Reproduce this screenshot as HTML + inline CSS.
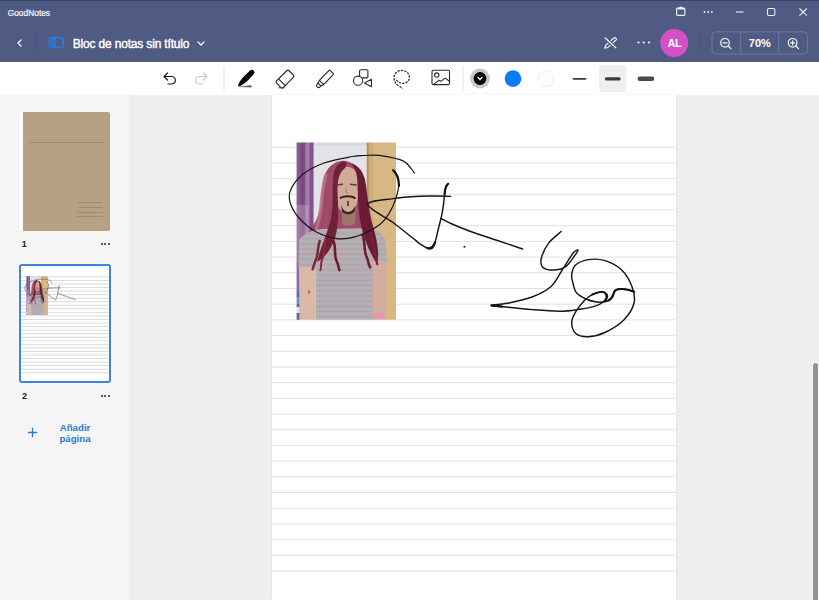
<!DOCTYPE html>
<html><head><meta charset="utf-8">
<style>
*{margin:0;padding:0;box-sizing:border-box}
html,body{width:819px;height:600px;overflow:hidden;background:#eeeeee;font-family:"Liberation Sans",sans-serif}
.abs{position:absolute}
#top{position:absolute;left:0;top:0;width:819px;height:62px;background:#505b83}
#topline{position:absolute;left:0;top:0;width:819px;height:1px;background:#3b4463}
#apptitle{position:absolute;left:7.7px;top:7.8px;font-size:8.4px;color:#f6f7fa;line-height:11px;-webkit-text-stroke:0.2px #f6f7fa}
#title{position:absolute;left:72.7px;top:36.6px;font-size:12px;color:#fff;line-height:14px;font-weight:400;letter-spacing:-0.17px;-webkit-text-stroke:0.4px #fff}
#toolbar{position:absolute;left:0;top:62px;width:819px;height:33px;background:#fff}
#sidebar{position:absolute;left:0;top:95px;width:129px;height:505px;background:#f5f5f5}
#canvas{position:absolute;left:129px;top:95px;width:690px;height:505px;background:#eeeeee}
#page{position:absolute;left:272px;top:95px;width:404px;height:505px;background:#fff;box-shadow:0 0 2px rgba(0,0,0,0.10)}
#scroll{position:absolute;left:813.2px;top:362.5px;width:4.5px;height:240px;background:#939393;border-radius:3px;box-shadow:0 0 0 1px rgba(255,255,255,0.5)}
.lbl{position:absolute;font-size:9px;font-weight:700;color:#1b1b1b;line-height:10px}
.dots3{position:absolute;width:10px;height:2px}
.dots3 i{position:absolute;top:0;width:2px;height:2px;border-radius:1px;background:#222}
</style></head><body>
<div id="top"></div>
<div id="topline"></div>
<div id="apptitle">GoodNotes</div>

<!-- title bar controls -->
<svg class="abs" style="left:660px;top:0" width="159" height="25" viewBox="660 0 159 25" fill="none" stroke="#eef0f6" stroke-width="1.1">
  <!-- clipboard -->
  <rect x="676.6" y="8" width="8.3" height="7.4" rx="1.2" stroke-width="1.2"/>
  <path d="M677.5,9.4 L684,9.4 L684,8 L681.8,7.2 L680.75,6.2 L679.7,7.2 L677.5,8 Z" fill="#eef0f6" stroke="none"/>
  <!-- dots -->
  <circle cx="704.5" cy="12" r="0.9" fill="#eef0f6" stroke="none"/>
  <circle cx="708.2" cy="12" r="0.9" fill="#eef0f6" stroke="none"/>
  <circle cx="711.9" cy="12" r="0.9" fill="#eef0f6" stroke="none"/>
  <!-- minimize -->
  <line x1="736" y1="12" x2="743.5" y2="12"/>
  <!-- maximize -->
  <rect x="767.5" y="8.5" width="7.3" height="7" rx="1.2"/>
  <!-- close -->
  <path d="M799.5 8.5 L806.8 15.6 M806.8 8.5 L799.5 15.6"/>
</svg>

<!-- header left -->
<svg class="abs" style="left:0;top:25px" width="220" height="37" viewBox="0 25 220 37" fill="none">
  <path d="M21 40 L18 43 L21 46" stroke="#fff" stroke-width="1.3" stroke-linecap="round" stroke-linejoin="round"/>
  <line x1="36.5" y1="34.5" x2="36.5" y2="51" stroke="#46507a" stroke-width="1"/>
  <rect x="49.2" y="37.6" width="14" height="9.9" rx="2.4" stroke="#2c79d8" stroke-width="1.7"/>
  <rect x="49.5" y="38" width="5.5" height="9.2" fill="#3a6cc0"/>
  <line x1="54.8" y1="37.8" x2="54.8" y2="47.5" stroke="#2c79d8" stroke-width="1.6"/>
  <path d="M198 42 L201 45 L204 42" stroke="#fff" stroke-width="1.2" stroke-linecap="round" stroke-linejoin="round"/>
</svg>
<div id="title">Bloc de notas sin título</div>

<!-- header right -->
<svg class="abs" style="left:590px;top:25px" width="229" height="37" viewBox="590 25 229 37" fill="none" stroke="#f4f5f9">
  <!-- pen slash -->
  <g stroke-width="1.2" stroke-linecap="round" stroke-linejoin="round">
    <g transform="translate(604.6,48.3) rotate(-41.6)"><path d="M0,0 L3,-1.5 L13.8,-1.5 A1.5,1.5 0 0 1 13.8,1.5 L3,1.5 Z" stroke-width="1.1"/></g>
    <path d="M605.3 38 L615.8 47.8" stroke="#505b83" stroke-width="3.4"/>
    <path d="M605.3 38 L615.8 47.8" stroke-width="1.3"/>
  </g>
  <circle cx="638.5" cy="42.5" r="1.1" fill="#f4f5f9" stroke="none"/>
  <circle cx="643.7" cy="42.5" r="1.1" fill="#f4f5f9" stroke="none"/>
  <circle cx="648.9" cy="42.5" r="1.1" fill="#f4f5f9" stroke="none"/>
  <circle cx="674.2" cy="43" r="14" fill="#d64fc6" stroke="none"/>
  <line x1="699.5" y1="34.5" x2="699.5" y2="51" stroke="#46507a"/>
  <rect x="712" y="31.8" width="95.6" height="22.2" rx="4" stroke="#6e779b" stroke-width="1"/>
  <line x1="740.7" y1="32" x2="740.7" y2="54" stroke="#6e779b"/>
  <line x1="778.7" y1="32" x2="778.7" y2="54" stroke="#6e779b"/>
  <g stroke-width="1.2" stroke-linecap="round">
    <circle cx="725" cy="42.8" r="4.3"/>
    <line x1="728.2" y1="46" x2="731" y2="48.6"/>
    <line x1="723" y1="42.8" x2="727" y2="42.8"/>
    <circle cx="792.6" cy="42.8" r="4.3"/>
    <line x1="795.8" y1="46" x2="798.6" y2="48.6"/>
    <line x1="790.6" y1="42.8" x2="794.6" y2="42.8"/>
    <line x1="792.6" y1="40.8" x2="792.6" y2="44.8"/>
  </g>
</svg>
<div class="abs" style="left:660.3px;top:37px;width:28.4px;text-align:center;font-size:11px;font-weight:700;color:#fff;line-height:13px;letter-spacing:-0.3px">AL</div>
<div class="abs" style="left:741px;top:36.5px;width:37.7px;text-align:center;font-size:11px;font-weight:700;color:#fff;line-height:13px">70%</div>

<div id="toolbar"></div>
<!-- toolbar icons -->
<svg class="abs" style="left:150px;top:62px" width="520" height="33" viewBox="150 62 520 33" fill="none" stroke="#1c1c1c" stroke-width="1.2" stroke-linecap="round" stroke-linejoin="round">
  <!-- undo -->
  <path d="M167.5 73 L164 76.5 L167.5 80"/>
  <path d="M164.5 76.5 H172 A4 3.8 0 0 1 172 84 H168"/>
  <!-- redo -->
  <g stroke="#c9c9c9">
    <path d="M203.5 73 L207 76.5 L203.5 80"/>
    <path d="M206.5 76.5 H199 A4 3.8 0 0 0 199 84 H203"/>
  </g>
  <line x1="224" y1="66.5" x2="224" y2="91" stroke="#e3e3e3" stroke-width="1"/>
  <!-- pen -->
  <g transform="translate(238.1,86.4) rotate(-45.5)" stroke="none">
    <path d="M0,0 C3,-2.6 10,-3.1 19.6,-2.6 A2.6,2.6 0 0 1 19.6,2.6 C10,3.1 3,2.6 0,0 Z" fill="#050505"/>
    <line x1="12.3" y1="-3" x2="12.3" y2="3" stroke="#555" stroke-width="0.5"/>
  </g>
  <path d="M239.5,86.5 L251.2,85.6 L251.2,87.1 Z" fill="#444" stroke="#666" stroke-width="0.4"/>
  <!-- eraser -->
  <g transform="translate(284.9,79.25) rotate(45)" stroke="#262626" stroke-width="1.15">
    <rect x="-4.7" y="-8.9" width="9.4" height="17.6" rx="1.6"/>
    <line x1="-4.7" y1="4.3" x2="4.7" y2="4.3"/>
  </g>
  <line x1="278.8" y1="87.8" x2="284.4" y2="87.8" stroke="#444" stroke-width="0.9"/>
  <!-- highlighter -->
  <g transform="translate(326.4,77.4) rotate(-46)" stroke="#262626" stroke-width="1.1">
    <rect x="-7" y="-3" width="14.6" height="6" rx="1"/>
    <path d="M-7,-3 L-10,-2 M-7,3 L-10,2"/>
    <path d="M-10,-2 L-11.3,-2 A2,2 0 0 0 -11.3,2 L-10,2 Z"/>
  </g>
  <!-- shapes -->
  <g stroke="#2a2a2a" stroke-width="1.1">
    <path d="M359.6,75.5 V71 A1.2,1.2 0 0 1 360.8,69.8 H366.7 A1.2,1.2 0 0 1 367.9,71 V76.7 A1.2,1.2 0 0 1 366.7,77.9 H362.6"/>
    <circle cx="358.1" cy="80.7" r="4.6"/>
    <path d="M364.5,82.9 L371.4,79.2 L371.4,86.8 Z"/>
  </g>
  <!-- lasso -->
  <path transform="translate(0,0.6)" d="M396.6,79.2 C398.5,82.3 402,83.6 405,82.5 C408.3,81.3 409.8,78.5 409.3,75.5 C408.6,71.8 405.2,69.8 401.5,69.9 C397,70 393.7,73.4 394,77.5 C394.2,81 396.2,83.6 398.5,85.2 C400,86.2 401.5,87 402.6,87.8" stroke="#2a2a2a" stroke-width="1.25" stroke-linecap="butt" stroke-dasharray="2.3 1.1"/>
  <!-- image -->
  <g stroke="#2a2a2a" stroke-width="1.1">
    <rect x="432" y="70.3" width="17.5" height="14.3" rx="1.4"/>
    <circle cx="436.7" cy="75.1" r="2.2"/>
    <path d="M433.6,84.4 L439.1,80.2 L440.8,81.4 L445.2,78.1 L449.5,81.3"/>
  </g>
  <!-- colors -->
  <circle cx="480" cy="78.5" r="10" fill="#c8c8c8" stroke="none"/>
  <circle cx="480" cy="78.5" r="6.4" fill="#000" stroke="none"/>
  <path d="M477.9,77.5 L480,79.5 L482.1,77.5" stroke="#fff" stroke-width="1.2"/>
  <circle cx="513" cy="78.6" r="8.3" fill="#0a7bf4" stroke="none"/>
  <circle cx="546" cy="78.6" r="8" fill="#fdfdfd" stroke="#efefef" stroke-width="1"/>
  <!-- widths -->
  <rect x="599" y="65" width="27.5" height="27.2" rx="4" fill="#efefef" stroke="none"/>
  <line x1="573.5" y1="78.8" x2="585.5" y2="78.8" stroke="#3c3c3c" stroke-width="1.8"/>
  <line x1="606.5" y1="78.8" x2="619" y2="78.8" stroke="#3c3c3c" stroke-width="3.3"/>
  <line x1="639.8" y1="78.8" x2="652" y2="78.8" stroke="#4a4a4a" stroke-width="4.6"/>
  <line x1="463" y1="66.5" x2="463" y2="91" stroke="#e3e3e3" stroke-width="1"/>
</svg>

<div id="sidebar"></div>
<div id="canvas"></div>
<!-- thumb 1 -->
<div class="abs" style="left:18.7px;top:111.7px;width:4.5px;height:119px;background:#fcfcfb;border-radius:2px 0 0 2px;box-shadow:0 0 1.5px rgba(0,0,0,0.1)"></div>
<div class="abs" style="left:23px;top:111.7px;width:87px;height:119px;background:#b6a185;border-radius:0 2px 2px 0"></div>
<div class="abs" style="left:30px;top:141.6px;width:74px;height:1px;background:#a08b70"></div>
<div class="abs" style="left:77px;top:201.6px;width:25.5px;height:1px;background:#a08b70"></div>
<div class="abs" style="left:77px;top:206.6px;width:25.5px;height:1px;background:#a08b70"></div>
<div class="abs" style="left:77px;top:211.6px;width:25.5px;height:1px;background:#a08b70"></div>
<div class="abs" style="left:77px;top:216.2px;width:25.5px;height:1px;background:#a08b70"></div>
<div class="lbl" style="left:21.8px;top:238.5px">1</div>
<div class="dots3" style="left:100.5px;top:242.5px"><i style="left:0"></i><i style="left:3.8px"></i><i style="left:7.6px"></i></div>
<!-- thumb 2 -->
<div class="abs" style="left:18.7px;top:264.2px;width:92px;height:118.8px;border:2px solid #3c87d9;border-radius:3px;background:#fff;overflow:hidden">
  <div style="position:absolute;left:0;top:0;width:404px;height:527px;transform:scale(0.2178);transform-origin:0 0"><svg width="404" height="527" viewBox="0 0 404 527"><rect x="0" y="47.67" width="404" height="4.5" fill="#dadada"/><rect x="0" y="63.97" width="404" height="4.5" fill="#dadada"/><rect x="0" y="80.27" width="404" height="4.5" fill="#dadada"/><rect x="0" y="96.57" width="404" height="4.5" fill="#dadada"/><rect x="0" y="112.87" width="404" height="4.5" fill="#dadada"/><rect x="0" y="129.17" width="404" height="4.5" fill="#dadada"/><rect x="0" y="145.46" width="404" height="4.5" fill="#dadada"/><rect x="0" y="161.76" width="404" height="4.5" fill="#dadada"/><rect x="0" y="178.06" width="404" height="4.5" fill="#dadada"/><rect x="0" y="194.36" width="404" height="4.5" fill="#dadada"/><rect x="0" y="210.66" width="404" height="4.5" fill="#dadada"/><rect x="0" y="226.96" width="404" height="4.5" fill="#dadada"/><rect x="0" y="243.26" width="404" height="4.5" fill="#dadada"/><rect x="0" y="259.56" width="404" height="4.5" fill="#dadada"/><rect x="0" y="275.86" width="404" height="4.5" fill="#dadada"/><rect x="0" y="292.16" width="404" height="4.5" fill="#dadada"/><rect x="0" y="308.46" width="404" height="4.5" fill="#dadada"/><rect x="0" y="324.76" width="404" height="4.5" fill="#dadada"/><rect x="0" y="341.06" width="404" height="4.5" fill="#dadada"/><rect x="0" y="357.36" width="404" height="4.5" fill="#dadada"/><rect x="0" y="373.66" width="404" height="4.5" fill="#dadada"/><rect x="0" y="389.96" width="404" height="4.5" fill="#dadada"/><rect x="0" y="406.25" width="404" height="4.5" fill="#dadada"/><rect x="0" y="422.55" width="404" height="4.5" fill="#dadada"/><rect x="0" y="438.85" width="404" height="4.5" fill="#dadada"/><rect x="0" y="455.15" width="404" height="4.5" fill="#dadada"/><rect x="0" y="471.45" width="404" height="4.5" fill="#dadada"/><rect x="0" y="487.75" width="404" height="4.5" fill="#dadada"/><g transform="translate(-272,-95)"><defs><clipPath id="qc"><rect x="296.6" y="142.4" width="99.39999999999998" height="177.29999999999998"/></clipPath>
<filter id="qb" x="-5%" y="-5%" width="110%" height="110%"><feGaussianBlur stdDeviation="0.75"/></filter>
<pattern id="qs" x="0" y="1" width="10" height="5.2" patternUnits="userSpaceOnUse"><rect width="10" height="5.2" fill="#b0b1b5"/><rect y="3.2" width="10" height="1.1" fill="#bf98a2"/></pattern>
</defs>
<g clip-path="url(#qc)"><g filter="url(#qb)">
<rect x="294.6" y="140.4" width="103.39999999999998" height="181.29999999999998" fill="#e3e3e6"/>
<rect x="313" y="140.4" width="55" height="5" fill="#d6d6da"/>
<!-- door -->
<rect x="366.8" y="140.4" width="32" height="182" fill="#d0ad78"/>
<rect x="373" y="140.4" width="25" height="182" fill="#d7b885"/>
<rect x="366.8" y="140.4" width="1.8" height="182" fill="#b59064"/>
<!-- curtain -->
<rect x="294.6" y="140.4" width="18.5" height="145" fill="#8a5890"/>
<rect x="300.5" y="140.4" width="4" height="145" fill="#774a7d"/>
<rect x="305.5" y="140.4" width="4" height="145" fill="#a57aab"/>
<rect x="310.5" y="140.4" width="3" height="145" fill="#80528a"/>
<rect x="294.6" y="205" width="14" height="70" fill="#d8b4d8" opacity="0.35"/>
<rect x="294.6" y="262" width="8" height="30" fill="#8a6aa8"/>
<rect x="294.6" y="290" width="8" height="32" fill="#5a6a9a"/>
<rect x="294.6" y="297" width="6" height="7" fill="#5b95d0"/>
<rect x="294.6" y="307" width="6" height="6" fill="#e4e0ea"/>
<!-- hair back mass -->
<path d="M342,160.8 C336,161.5 330,165 326,172 C322,180 321.5,192 320.5,204 C319.5,214 316,222 311,228 C309,240 310,254 316,268 L330,266 L356,262 L378,266 C381,256 380,244 376.7,235 C372,226 368,216 367.3,208 C366.5,196 365.5,184 362,174 C359,167 353,161 342,160.8 Z" fill="#a24a68"/>
<path d="M326,174 C322,186 322,200 320,214 C318,224 315,232 314,244" stroke="#c07a94" stroke-width="3.5" fill="none" opacity="0.7"/>
<!-- shirt -->
<path d="M299,240 C304,233 313,230 322,229 L368,228 C377,229 383,233 385.5,240 L387,262 L373,263 L372.5,322 L315.5,322 L315.5,268 L298.5,268 Z" fill="url(#qs)"/>
<!-- arms -->
<path d="M299,267 L315.5,267 L315,322 L299.5,322 Z" fill="#d9b8a8"/>
<path d="M372.8,262 L386.5,262 L385.5,322 L373,322 Z" fill="#d2ac9c"/>
<path d="M308,290 l3,2 l-3,2 z" fill="#8a7068"/>
<rect x="373.5" y="312.5" width="10.5" height="5.5" rx="2" fill="#ef90b4"/>
<!-- neck & face -->
<path d="M342,208 L356,208 L355,224 C351,226 346,226 342,224 Z" fill="#9c7466"/>
<path d="M335,178 C335.5,171 339,167 346,166.8 C353,167 357,171 357.5,178 L358,195 C357.5,206 354,213.5 347.5,214 C340.5,213.5 336,206 335.5,195 Z" fill="#d0ab98"/>
<!-- hair locks -->
<path d="M344,161 C337,163 333.5,169 333,180 C332.5,194 333,206 331,218 C328,232 321,246 317,262 C324,258 331,250 335,238 C338.5,226 338.5,212 337.8,198 C337,184 337.5,174 345,168 C347,166 347,162 344,161 Z" fill="#6e2236"/>
<path d="M351,164 C355,167.5 357,173 357.5,182 C358,196 358,210 360.5,222 C363,236 368,250 377,264 C380,254 377,240 373,226 C369,212 367.5,196 365.5,182 C363.5,171 358,165 351,164 Z" fill="#6a1f34"/>
<path d="M320,240 C317,248 319,254 315,262 C313,266 314,268 312,270" stroke="#7a2038" stroke-width="2.4" fill="none"/>
<path d="M326,238 C323,246 326,252 322,260 C320,264 322,268 320,271" stroke="#8a2a45" stroke-width="2" fill="none"/>
<path d="M333,240 C337,248 333,254 337,262 C339,266 338,268 340,271" stroke="#6e1c33" stroke-width="2.6" fill="none"/>
<path d="M362,234 C366,242 363,250 367,258 C369,262 368,266 371,268" stroke="#6e1c33" stroke-width="2.6" fill="none"/>
<path d="M370,232 C374,240 372,248 376,256 C377,260 376,263 378,265" stroke="#7a2038" stroke-width="2.2" fill="none"/>
<!-- features -->
<path d="M336.5,185 L343,184.3 M350,184.3 L356.5,185" stroke="#5a3c34" stroke-width="1.4"/>
<path d="M345.8,187 L346.2,193 L348.5,193" stroke="#a88474" stroke-width="0.8" fill="none"/>
<path d="M340,198.5 C343,195.5 352,195.5 355.5,198.5" stroke="#35221d" stroke-width="1.8" fill="none"/>
<path d="M341,205 C344,214 351.5,214.5 355.5,205.5 L354.5,211.5 C350.5,215 345.5,215 342,211.5 Z" fill="#2f2420"/>
<rect x="347.2" y="201" width="1.6" height="5" fill="#4a3028"/>
</g></g></g><g fill="none" stroke="#6a6a6a" stroke-width="3.2" stroke-linecap="round"><path d="M142.5,78.0 C140.6,76.0 136.9,68.8 131.0,65.9 C125.1,63.0 113.5,61.3 107.0,60.4 C100.5,59.5 96.4,60.3 92.0,60.5 C87.6,60.7 87.2,60.2 80.5,61.5 C73.8,62.8 60.4,64.9 52.0,68.0 C43.6,71.1 35.7,75.2 30.0,80.0 C24.3,84.8 19.8,91.6 18.0,96.6 C16.2,101.6 17.3,105.4 19.0,110.0 C20.7,114.6 23.8,119.5 28.0,124.0 C32.2,128.5 37.9,133.5 44.0,136.8 C50.1,140.1 58.4,142.7 64.7,143.6 C71.0,144.5 75.7,143.9 82.0,142.2 C88.3,140.5 97.2,136.2 102.3,133.3 C107.4,130.4 109.5,128.5 112.6,124.8 C115.7,121.1 118.8,115.9 121.0,111.0 C123.2,106.1 125.1,100.1 126.0,95.7 C126.9,91.3 127.1,87.9 126.3,84.5 C125.5,81.1 121.9,76.7 121.0,75.2"/><path d="M178.6,101.4 C176.2,101.3 169.1,101.0 164.0,101.0 C158.9,101.0 155.2,100.8 148.0,101.2 C140.8,101.6 129.7,102.2 121.0,103.6 C112.3,105.0 95.8,105.6 95.8,109.6 C95.8,113.6 113.6,122.0 121.0,127.5 C128.4,133.0 135.5,139.0 140.0,142.5 C144.5,146.0 145.4,147.0 148.0,148.8 C150.6,150.5 153.5,152.3 155.5,153.1 C157.5,153.9 158.6,154.4 159.9,153.5 C161.1,152.6 162.0,150.6 163.0,147.5 C164.0,144.4 165.1,139.2 166.1,135.0 C167.1,130.8 168.4,126.2 169.2,122.5 C170.1,118.8 170.6,116.0 171.1,112.5 C171.6,109.0 172.0,104.6 172.4,101.2 C172.8,97.9 173.0,94.6 173.6,92.5 C174.2,90.4 175.7,89.4 176.1,88.8"/><path d="M169.2,123.5 C171.0,124.4 175.2,126.9 180.0,129.0 C184.8,131.1 190.7,133.6 198.0,136.2 C205.3,138.9 215.2,142.0 224.0,145.0 C232.8,148.0 246.2,152.5 250.6,154.0"/></g></svg></div>
</div>
<div class="lbl" style="left:22px;top:391px">2</div>
<div class="dots3" style="left:100.5px;top:394.8px"><i style="left:0"></i><i style="left:3.8px"></i><i style="left:7.6px"></i></div>
<!-- add page -->
<svg class="abs" style="left:26px;top:426px" width="13" height="13" viewBox="0 0 13 13"><path d="M6.5,1.8 V11.2 M1.8,6.5 H11.2" stroke="#2c7bd5" stroke-width="1.3"/></svg>
<div class="abs" style="left:59px;top:422.5px;width:32px;text-align:center;font-size:9.7px;font-weight:700;color:#2b7ad4;line-height:10px">Añadir</div><div class="abs" style="left:59px;top:433.5px;width:32px;text-align:center;font-size:9.7px;font-weight:700;color:#2b7ad4;line-height:10px">página</div>
<div id="page"><svg width="404" height="505" viewBox="0 0 404 505"><rect x="0" y="51.70" width="403" height="1" fill="#e0e0e4"/><rect x="0" y="67.40" width="403" height="1" fill="#e0e0e4"/><rect x="0" y="83.09" width="403" height="1" fill="#e0e0e4"/><rect x="0" y="98.79" width="403" height="1" fill="#e0e0e4"/><rect x="0" y="114.48" width="403" height="1" fill="#e0e0e4"/><rect x="0" y="130.18" width="403" height="1" fill="#e0e0e4"/><rect x="0" y="145.88" width="403" height="1" fill="#e0e0e4"/><rect x="0" y="161.57" width="403" height="1" fill="#e0e0e4"/><rect x="0" y="177.27" width="403" height="1" fill="#e0e0e4"/><rect x="0" y="192.96" width="403" height="1" fill="#e0e0e4"/><rect x="0" y="208.66" width="403" height="1" fill="#e0e0e4"/><rect x="0" y="224.36" width="403" height="1" fill="#e0e0e4"/><rect x="0" y="240.05" width="403" height="1" fill="#e0e0e4"/><rect x="0" y="255.75" width="403" height="1" fill="#e0e0e4"/><rect x="0" y="271.44" width="403" height="1" fill="#e0e0e4"/><rect x="0" y="287.14" width="403" height="1" fill="#e0e0e4"/><rect x="0" y="302.84" width="403" height="1" fill="#e0e0e4"/><rect x="0" y="318.53" width="403" height="1" fill="#e0e0e4"/><rect x="0" y="334.23" width="403" height="1" fill="#e0e0e4"/><rect x="0" y="349.92" width="403" height="1" fill="#e0e0e4"/><rect x="0" y="365.62" width="403" height="1" fill="#e0e0e4"/><rect x="0" y="381.32" width="403" height="1" fill="#e0e0e4"/><rect x="0" y="397.01" width="403" height="1" fill="#e0e0e4"/><rect x="0" y="412.71" width="403" height="1" fill="#e0e0e4"/><rect x="0" y="428.40" width="403" height="1" fill="#e0e0e4"/><rect x="0" y="444.10" width="403" height="1" fill="#e0e0e4"/><rect x="0" y="459.80" width="403" height="1" fill="#e0e0e4"/><rect x="0" y="475.49" width="403" height="1" fill="#e0e0e4"/><g transform="translate(-272,-95)"><defs><clipPath id="pc"><rect x="296.6" y="142.4" width="99.39999999999998" height="177.29999999999998"/></clipPath>
<filter id="pb" x="-5%" y="-5%" width="110%" height="110%"><feGaussianBlur stdDeviation="0.75"/></filter>
<pattern id="ps" x="0" y="1" width="10" height="5.2" patternUnits="userSpaceOnUse"><rect width="10" height="5.2" fill="#b0b1b5"/><rect y="3.2" width="10" height="1.1" fill="#bf98a2"/></pattern>
</defs>
<g clip-path="url(#pc)"><g filter="url(#pb)">
<rect x="294.6" y="140.4" width="103.39999999999998" height="181.29999999999998" fill="#e3e3e6"/>
<rect x="313" y="140.4" width="55" height="5" fill="#d6d6da"/>
<!-- door -->
<rect x="366.8" y="140.4" width="32" height="182" fill="#d0ad78"/>
<rect x="373" y="140.4" width="25" height="182" fill="#d7b885"/>
<rect x="366.8" y="140.4" width="1.8" height="182" fill="#b59064"/>
<!-- curtain -->
<rect x="294.6" y="140.4" width="18.5" height="145" fill="#8a5890"/>
<rect x="300.5" y="140.4" width="4" height="145" fill="#774a7d"/>
<rect x="305.5" y="140.4" width="4" height="145" fill="#a57aab"/>
<rect x="310.5" y="140.4" width="3" height="145" fill="#80528a"/>
<rect x="294.6" y="205" width="14" height="70" fill="#d8b4d8" opacity="0.35"/>
<rect x="294.6" y="262" width="8" height="30" fill="#8a6aa8"/>
<rect x="294.6" y="290" width="8" height="32" fill="#5a6a9a"/>
<rect x="294.6" y="297" width="6" height="7" fill="#5b95d0"/>
<rect x="294.6" y="307" width="6" height="6" fill="#e4e0ea"/>
<!-- hair back mass -->
<path d="M342,160.8 C336,161.5 330,165 326,172 C322,180 321.5,192 320.5,204 C319.5,214 316,222 311,228 C309,240 310,254 316,268 L330,266 L356,262 L378,266 C381,256 380,244 376.7,235 C372,226 368,216 367.3,208 C366.5,196 365.5,184 362,174 C359,167 353,161 342,160.8 Z" fill="#a24a68"/>
<path d="M326,174 C322,186 322,200 320,214 C318,224 315,232 314,244" stroke="#c07a94" stroke-width="3.5" fill="none" opacity="0.7"/>
<!-- shirt -->
<path d="M299,240 C304,233 313,230 322,229 L368,228 C377,229 383,233 385.5,240 L387,262 L373,263 L372.5,322 L315.5,322 L315.5,268 L298.5,268 Z" fill="url(#ps)"/>
<!-- arms -->
<path d="M299,267 L315.5,267 L315,322 L299.5,322 Z" fill="#d9b8a8"/>
<path d="M372.8,262 L386.5,262 L385.5,322 L373,322 Z" fill="#d2ac9c"/>
<path d="M308,290 l3,2 l-3,2 z" fill="#8a7068"/>
<rect x="373.5" y="312.5" width="10.5" height="5.5" rx="2" fill="#ef90b4"/>
<!-- neck & face -->
<path d="M342,208 L356,208 L355,224 C351,226 346,226 342,224 Z" fill="#9c7466"/>
<path d="M335,178 C335.5,171 339,167 346,166.8 C353,167 357,171 357.5,178 L358,195 C357.5,206 354,213.5 347.5,214 C340.5,213.5 336,206 335.5,195 Z" fill="#d0ab98"/>
<!-- hair locks -->
<path d="M344,161 C337,163 333.5,169 333,180 C332.5,194 333,206 331,218 C328,232 321,246 317,262 C324,258 331,250 335,238 C338.5,226 338.5,212 337.8,198 C337,184 337.5,174 345,168 C347,166 347,162 344,161 Z" fill="#6e2236"/>
<path d="M351,164 C355,167.5 357,173 357.5,182 C358,196 358,210 360.5,222 C363,236 368,250 377,264 C380,254 377,240 373,226 C369,212 367.5,196 365.5,182 C363.5,171 358,165 351,164 Z" fill="#6a1f34"/>
<path d="M320,240 C317,248 319,254 315,262 C313,266 314,268 312,270" stroke="#7a2038" stroke-width="2.4" fill="none"/>
<path d="M326,238 C323,246 326,252 322,260 C320,264 322,268 320,271" stroke="#8a2a45" stroke-width="2" fill="none"/>
<path d="M333,240 C337,248 333,254 337,262 C339,266 338,268 340,271" stroke="#6e1c33" stroke-width="2.6" fill="none"/>
<path d="M362,234 C366,242 363,250 367,258 C369,262 368,266 371,268" stroke="#6e1c33" stroke-width="2.6" fill="none"/>
<path d="M370,232 C374,240 372,248 376,256 C377,260 376,263 378,265" stroke="#7a2038" stroke-width="2.2" fill="none"/>
<!-- features -->
<path d="M336.5,185 L343,184.3 M350,184.3 L356.5,185" stroke="#5a3c34" stroke-width="1.4"/>
<path d="M345.8,187 L346.2,193 L348.5,193" stroke="#a88474" stroke-width="0.8" fill="none"/>
<path d="M340,198.5 C343,195.5 352,195.5 355.5,198.5" stroke="#35221d" stroke-width="1.8" fill="none"/>
<path d="M341,205 C344,214 351.5,214.5 355.5,205.5 L354.5,211.5 C350.5,215 345.5,215 342,211.5 Z" fill="#2f2420"/>
<rect x="347.2" y="201" width="1.6" height="5" fill="#4a3028"/>
</g></g></g><g fill="none" stroke="#151515" stroke-width="1.45" stroke-linecap="round" stroke-linejoin="round"><path d="M142.5,78.0 C140.6,76.0 136.9,68.8 131.0,65.9 C125.1,63.0 113.5,61.3 107.0,60.4 C100.5,59.5 96.4,60.3 92.0,60.5 C87.6,60.7 87.2,60.2 80.5,61.5 C73.8,62.8 60.4,64.9 52.0,68.0 C43.6,71.1 35.7,75.2 30.0,80.0 C24.3,84.8 19.8,91.6 18.0,96.6 C16.2,101.6 17.3,105.4 19.0,110.0 C20.7,114.6 23.8,119.5 28.0,124.0 C32.2,128.5 37.9,133.5 44.0,136.8 C50.1,140.1 58.4,142.7 64.7,143.6 C71.0,144.5 75.7,143.9 82.0,142.2 C88.3,140.5 97.2,136.2 102.3,133.3 C107.4,130.4 109.5,128.5 112.6,124.8 C115.7,121.1 118.8,115.9 121.0,111.0 C123.2,106.1 125.1,100.1 126.0,95.7 C126.9,91.3 127.1,87.9 126.3,84.5 C125.5,81.1 121.9,76.7 121.0,75.2" stroke-width="1.2"/><path d="M178.6,101.4 C176.2,101.3 169.1,101.0 164.0,101.0 C158.9,101.0 155.2,100.8 148.0,101.2 C140.8,101.6 129.7,102.2 121.0,103.6 C112.3,105.0 95.8,105.6 95.8,109.6 C95.8,113.6 113.6,122.0 121.0,127.5 C128.4,133.0 135.5,139.0 140.0,142.5 C144.5,146.0 145.4,147.0 148.0,148.8 C150.6,150.5 153.5,152.3 155.5,153.1 C157.5,153.9 158.6,154.4 159.9,153.5 C161.1,152.6 162.0,150.6 163.0,147.5 C164.0,144.4 165.1,139.2 166.1,135.0 C167.1,130.8 168.4,126.2 169.2,122.5 C170.1,118.8 170.6,116.0 171.1,112.5 C171.6,109.0 172.0,104.6 172.4,101.2 C172.8,97.9 173.0,94.6 173.6,92.5 C174.2,90.4 175.7,89.4 176.1,88.8"/><path d="M169.2,123.5 C171.0,124.4 175.2,126.9 180.0,129.0 C184.8,131.1 190.7,133.6 198.0,136.2 C205.3,138.9 215.2,142.0 224.0,145.0 C232.8,148.0 246.2,152.5 250.6,154.0"/><path d="M289.2,136.5 C287.2,138.4 280.0,143.6 276.8,147.9 C273.5,152.2 270.5,158.5 269.5,162.5 C268.5,166.5 268.6,169.8 270.5,171.9 C272.4,174.0 277.2,175.0 281.0,175.0 C284.8,175.0 289.8,174.3 293.4,171.9 C297.0,169.5 300.7,163.2 302.8,160.4 C304.9,157.6 306.2,155.7 306.0,155.2 C305.8,154.7 303.5,155.4 301.8,157.3 C300.0,159.2 297.6,163.4 295.5,166.7 C293.4,170.0 291.8,172.8 289.0,177.0 C286.2,181.2 283.6,187.5 278.8,191.7 C274.0,195.9 267.3,199.2 260.0,202.0 C252.7,204.8 241.8,206.9 235.0,208.3 C228.2,209.7 220.5,209.9 219.5,210.4 C218.5,210.9 222.1,210.8 228.8,211.5 C235.6,212.2 250.1,213.8 260.0,214.6 C269.9,215.4 280.1,216.3 288.0,216.2 C295.9,216.2 301.8,215.1 307.5,214.3 C313.2,213.5 318.1,212.7 322.2,211.4 C326.3,210.1 329.8,208.3 332.0,206.5 C334.2,204.7 335.7,202.1 335.4,200.5 C335.1,198.9 332.5,197.0 330.0,196.9 C327.5,196.7 323.1,198.2 320.2,199.6 C317.3,201.0 315.1,202.7 312.4,205.5 C309.7,208.3 306.2,212.7 304.1,216.2 C302.0,219.8 299.8,223.3 299.7,227.0 C299.7,230.7 301.0,236.1 303.8,238.5 C306.6,240.9 311.4,241.9 316.3,241.7 C321.2,241.5 327.1,240.3 333.0,237.5 C338.9,234.7 346.9,229.9 351.8,225.0 C356.6,220.1 360.6,213.9 362.0,208.3 C363.4,202.8 362.1,197.2 360.0,191.7 C357.9,186.1 354.2,179.3 349.7,175.0 C345.2,170.7 338.6,167.3 333.0,165.6 C327.4,163.9 321.2,163.9 316.3,164.6 C311.4,165.3 306.6,167.4 303.8,169.8 C301.0,172.2 300.2,176.3 299.7,179.2 C299.2,182.1 299.9,183.9 300.7,187.0 C301.5,190.1 302.1,194.8 304.5,197.7 C306.9,200.6 311.9,202.9 315.3,204.5 C318.7,206.1 322.4,206.6 325.0,207.0 C327.6,207.4 329.1,207.2 331.0,207.0 C332.9,206.8 334.9,206.3 336.5,205.5 C338.1,204.7 339.5,203.5 340.5,202.0 C341.5,200.5 341.4,197.8 342.5,196.5 C343.6,195.2 345.1,194.4 347.0,194.0 C348.9,193.6 351.5,193.8 354.0,194.2 C356.5,194.6 360.8,196.3 362.2,196.7"/></g><circle cx="192.39999999999998" cy="151.8" r="1.05" fill="#222"/><g fill="none" stroke="#111" stroke-linecap="round" stroke-width="2.2" transform="translate(-272,-95)"><path d="M444.6,194 C445,189 446,185.5 448.1,183.75"/><path d="M393.2,170.3 C397,173 398.8,178 399,186"/><path d="M604,301.5 C607,298.5 607.4,295.5 605,292.8 C603,291 598,292 592.2,294.6" stroke-width="1.9"/><path d="M608.5,300.5 C611,299 613,296.5 614.2,292 C615,289.5 618,288.8 622,289 C627,289.3 631,290.5 634.2,291.7" stroke-width="2.1"/><path d="M491.5,305.4 C495,305.6 498,306 502,306.6" stroke-width="2.2"/><path d="M427.5,248.1 C430,249 433,247.5 435,242.5"/></g></svg></div>
<div id="scroll"></div>
</body></html>
